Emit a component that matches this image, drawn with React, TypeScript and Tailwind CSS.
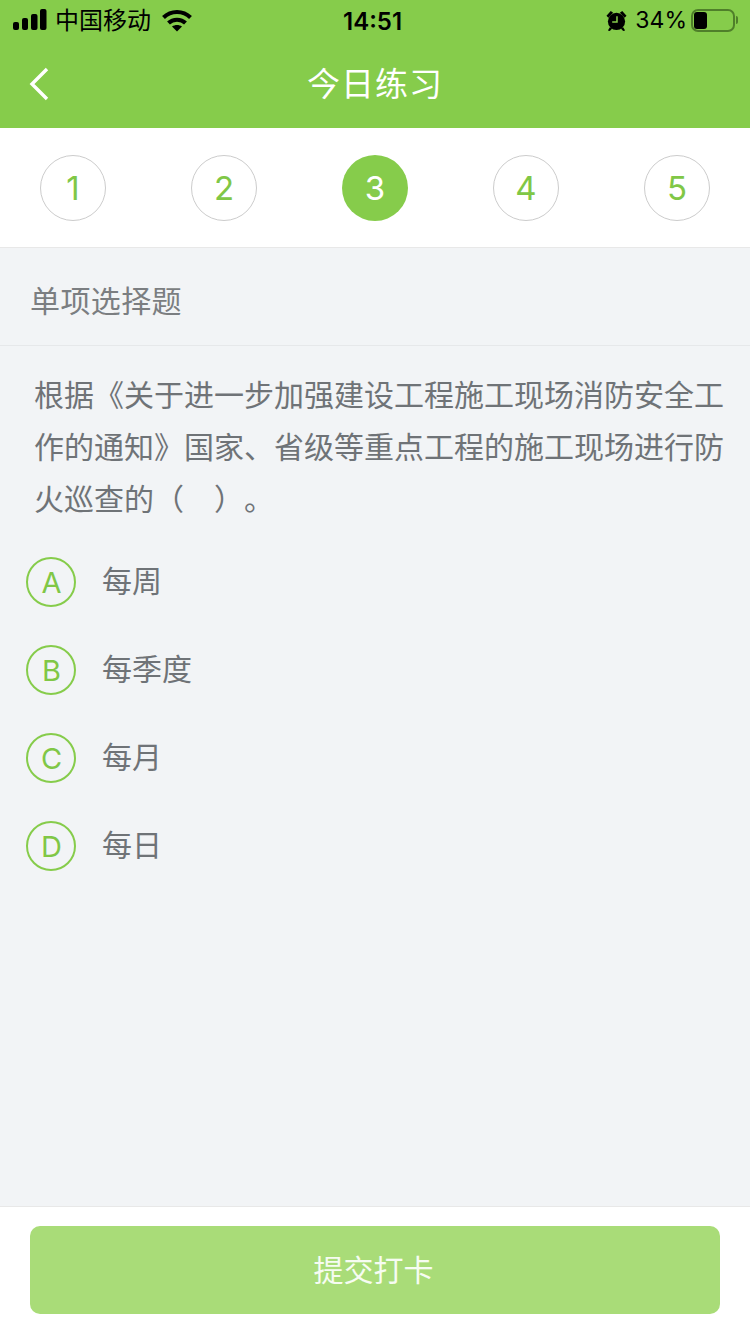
const FONT = "font-['Inter','Noto_Sans_CJK_SC',sans-serif]";

function StatusBar() {
  return (
    <div className="h-10 flex items-center justify-between text-black relative">
      <div className="flex items-center pl-[13px]">
        {/* signal */}
        <svg width="34" height="22" viewBox="0 0 34 22" fill="currentColor">
          <rect x="0" y="13" width="6" height="8" rx="2" />
          <rect x="9" y="9" width="6" height="12" rx="2" />
          <rect x="18" y="5" width="6.5" height="16" rx="2" />
          <rect x="27" y="0" width="6.5" height="21" rx="2" />
        </svg>
        <span className="ml-[8px] text-[24px] leading-none pt-[2px]">中国移动</span>
        <svg className="ml-[11px]" width="30" height="23" viewBox="0 0 30 23" fill="none" stroke="currentColor" strokeWidth="4">
          <path d="M1.5 8.5 C9 1 21 1 28.5 8.5" />
          <path d="M6.5 14 C11 9.5 19 9.5 23.5 14" />
          <path d="M15 22.5 L10 17.5 C13 15.5 17 15.5 20 17.5 Z" fill="currentColor" stroke="none" />
        </svg>
      </div>
      <span className="absolute left-[343px] top-[9px] text-[24px] leading-[26px] font-semibold">14:51</span>
      <div className="flex items-center pr-[12px]">
        <svg width="21" height="21" viewBox="0 0 22 22" fill="currentColor">
          <circle cx="11" cy="12" r="9" />
          <path d="M0.5 6 L5 1 L7.5 3 L2.5 8 Z M21.5 6 L17 1 L14.5 3 L19.5 8 Z" />
          <path d="M4 18 L2 21.5 L4 22 L6.5 19.5 Z M18 18 L20 21.5 L18 22 L15.5 19.5 Z" />
          <path d="M11.5 6.5 V12.5 H6.5" stroke="#86CC4B" strokeWidth="1.6" fill="none" />
        </svg>
        <span className="ml-[8px] text-[23px] leading-none pt-[1px]">34%</span>
        <div className="ml-[4px] w-[44px] h-[23px] rounded-[7px] border-2 border-[#4f7f2a] p-[1px] flex">
          <div className="w-[13px] rounded-[3px] bg-black" />
        </div>
        <div className="ml-[1px] w-[2px] h-[8px] rounded-r bg-[#4f7f2a]" />
      </div>
    </div>
  );
}

function Step({ n, active }: { n: number; active?: boolean }) {
  return (
    <div
      className={
        active
          ? "w-[66px] h-[66px] rounded-full bg-[#86CC4B] text-white flex items-center justify-center text-[33px] pt-[1px]"
          : "w-[66px] h-[66px] rounded-full border border-[#cccccc] text-[#80c746] flex items-center justify-center text-[33px] pt-[1px]"
      }
    >
      {n}
    </div>
  );
}

function Option({ letter, text }: { letter: string; text: string }) {
  return (
    <div className="h-[88px] flex items-center pl-[26px]">
      <div className="w-[50px] h-[50px] rounded-full border-2 border-[#86CC4B] text-[#80c746] flex items-center justify-center text-[29px] pt-[1px] pl-[1px]">
        {letter}
      </div>
      <span className="ml-[26px] text-[30px] leading-none text-[#6f7377] pb-[2px]">{text}</span>
    </div>
  );
}

export default function App() {
  return (
    <div className={`${FONT} w-[750px] h-[1334px] flex flex-col bg-[#f2f4f6]`}>
      {/* Header */}
      <div className="h-[128px] bg-[#86CC4B] shrink-0">
        <StatusBar />
        <div className="h-[88px] relative flex items-center justify-center pt-[2px]">
          <svg className="absolute left-[28px] top-[27px]" width="22" height="34" viewBox="0 0 22 34" fill="none" stroke="#ffffff" strokeWidth="3.4">
            <path d="M19 2 L4 17 L19 32" />
          </svg>
          <span className="text-white text-[33px] tracking-[1px]">今日练习</span>
        </div>
      </div>

      {/* Steps */}
      <div className="h-[120px] bg-white border-b border-[#e8e8e8] shrink-0 flex items-start justify-between px-[40px] pt-[27px]">
        <Step n={1} />
        <Step n={2} />
        <Step n={3} active />
        <Step n={4} />
        <Step n={5} />
      </div>

      {/* Question */}
      <div className="h-[98px] border-b border-[#e6e8ea] flex items-center pl-[30px] pt-[10px] text-[30px] tracking-[0.4px] text-[#7b7e81] shrink-0">
        单项选择题
      </div>
      <div className="flex-1 min-h-0">
        <p className="ml-[34px] mr-[26px] mt-[23px] text-[30px] leading-[52px] text-[#6f7377] [text-spacing-trim:space-all]">
          根据《关于进一步加强建设工程施工现场消防安全工作的通知》国家、省级等重点工程的施工现场进行防火巡查的（<span className="inline-block w-[30px]" />）。
        </p>
        <div className="mt-[13px]">
          <Option letter="A" text="每周" />
          <Option letter="B" text="每季度" />
          <Option letter="C" text="每月" />
          <Option letter="D" text="每日" />
        </div>
      </div>

      {/* Submit */}
      <div className="h-[128px] bg-white border-t border-[#e8e8e8] shrink-0 px-[30px] pt-[19px]">
        <div className="h-[88px] rounded-[10px] bg-[#A9DC78] text-white/90 text-[30px] flex items-center justify-center pr-[3px]">
          提交打卡
        </div>
      </div>
    </div>
  );
}
